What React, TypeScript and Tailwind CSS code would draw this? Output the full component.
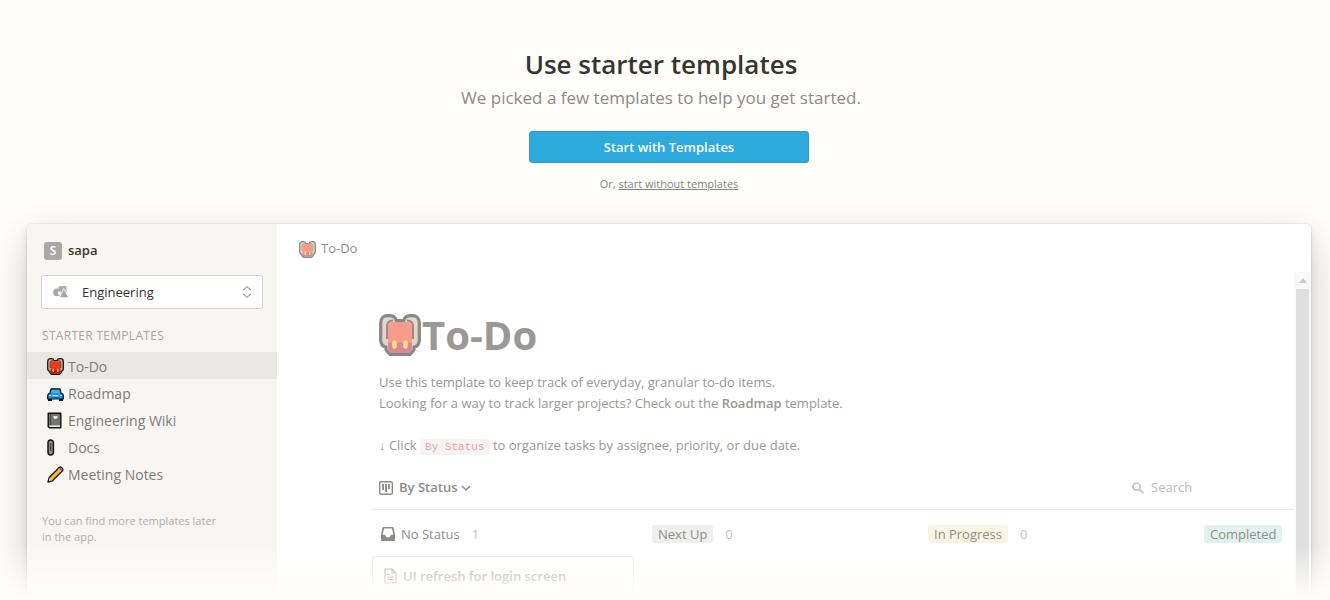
import type { ReactNode } from "react";

type IconProps = { className?: string };

function Backpack({ className = "" }: IconProps) {
  return (
    <svg viewBox="0 0 42 42" className={className} aria-hidden="true">
      <path
        d="M8.500 1.700h2.500c3.500 0 5.500 2 6.200 4.800h7.600C25.500 3.700 27.500 1.700 31 1.700h2.500c4 0 6.800 3 6.800 7V26c0 4-2 6.500-5.300 7v3l-4 4.300H11L7 36v-3c-3.300-.5-5.300-3-5.300-7V8.700c0-4 2.800-7 6.800-7z"
        fill="#cbb091"
        stroke="#141414"
        strokeWidth="3.200"
        strokeLinejoin="round"
      />
      <path d="M14 6.500c-4.500 0-6 2-6 6V25M28 6.500c4.500 0 6 2 6 6V25" fill="none" stroke="#2a1c16" strokeWidth="2" />
      <path d="M12 8h18c2 0 3 1 3 3v19H9V11c0-2 1-3 3-3z" fill="#f03a17" />
      <path d="M9 28.500h24V35c0 3-2 4-4 4H13c-2 0-4-1-4-4z" fill="#b0152f" />
      <path d="M15.500 28.500v4M26.500 28.500v4" stroke="#ffc21a" strokeWidth="4.400" strokeLinecap="round" />
    </svg>
  );
}

function Car() {
  return (
    <svg viewBox="0 0 17 17" className="size-[17px]" aria-hidden="true">
      <path d="M1 12.500h4V16H1zM12 12.500h4V16h-4z" fill="#111" />
      <path
        d="M4.700 3.800h7.600c.5 0 .9.300 1 .8L14 8c1.300.3 2.300 1.100 2.300 2.500V14H.7v-3.500C.7 9.100 1.700 8.300 3 8l.7-3.400c.1-.5.5-.8 1-.8z"
        fill="#2390dc"
        stroke="#111"
        strokeWidth="1.200"
        strokeLinejoin="round"
      />
      <path d="M4.900 4.900h7.200l.6 3H4.300z" fill="#43aeea" />
      <path d="M2 10.500h2M13 10.500h2M5.500 10.700h6" stroke="#b9e6fb" strokeWidth="1.200" />
      <path d="M5 12.700h7" stroke="#0d65a6" strokeWidth="1.200" />
    </svg>
  );
}

function Notebook() {
  return (
    <svg viewBox="0 0 17 17" className="size-[17px]" aria-hidden="true">
      <path d="M1.200 1.200h12.600v14.600H2.500l-1.300-1.300z" fill="#747474" stroke="#111" strokeWidth="1.400" strokeLinejoin="round" />
      <path d="M3.500 2v11" stroke="#4a4a4a" strokeWidth="1.200" />
      <path d="M2.500 14.200h10.500" stroke="#f3f3f3" strokeWidth="1.500" />
      <path d="M6.500 4h4v1.500L9.300 7H7.700L6.500 5.500z" fill="#ececec" />
    </svg>
  );
}

function Paperclip() {
  return (
    <svg viewBox="0 0 17 17" className="size-[17px]" aria-hidden="true">
      <rect x="1" y="1" width="5.400" height="15" rx="2.700" fill="#8f8f8f" stroke="#141414" strokeWidth="1.500" />
      <path d="M3.700 4.500v7" stroke="#2b2b2b" strokeWidth="1" strokeLinecap="round" />
    </svg>
  );
}

function Pencil() {
  return (
    <svg viewBox="0 0 17 17" className="size-[17px]" aria-hidden="true">
      <path d="M1 16l1.200-4.500L12.500 1.300c1.200-1 4.200 1.800 3.200 3.200L5.500 14.800z" fill="#fbb916" stroke="#141414" strokeWidth="1.300" strokeLinejoin="round" />
      <path d="M11.500 3l2.500 2.500" stroke="#bcbcbc" strokeWidth="1.300" />
      <path d="M12.800 1.900c1-.8 2.900 1 2.300 2.200l-.7.700-2.400-2.200z" fill="#d84a5f" />
      <path d="M2.700 12l2.300 2.300-3 .8z" fill="#f4d4a4" />
    </svg>
  );
}

const templates: { name: string; icon: ReactNode; active?: boolean }[] = [
  { name: "To-Do", icon: <Backpack className="size-[17px]" />, active: true },
  { name: "Roadmap", icon: <Car /> },
  { name: "Engineering Wiki", icon: <Notebook /> },
  { name: "Docs", icon: <Paperclip /> },
  { name: "Meeting Notes", icon: <Pencil /> },
];

function Sidebar() {
  return (
    <aside className="w-[250px] shrink-0 bg-[#f7f6f3] pt-[15px]">
      <div className="flex h-6 items-center gap-[6px] pl-[17px]">
        <span className="flex size-[18px] items-center justify-center rounded-[3px] bg-[#a9a8a6] text-xs font-semibold text-white">S</span>
        <span className="text-[13px] font-semibold text-[#37352f]">sapa</span>
      </div>

      <div className="relative mx-[14px] mt-3 text-[#a9a8a6]">
        <select
          aria-label="Team"
          className="h-[34px] w-full appearance-none rounded-[3px] border border-[#d6d5d2] bg-white pt-px pl-10 text-[13px] text-[#37352f]"
        >
          <option>Engineering</option>
        </select>
        <svg viewBox="0 0 16 12" className="pointer-events-none absolute top-[11px] left-3 h-3 w-4" aria-hidden="true">
          <circle cx="4" cy="6.300" r="3.900" fill="currentColor" />
          <path d="M5.500.2h8v8h-8z" fill="currentColor" />
          <path d="M5.200 5.500h2.600v3.200H5.200z" fill="#fff" />
          <path d="M10.800 2.500l5 9.300H6.300z" fill="currentColor" stroke="#fff" strokeWidth=".9" />
        </svg>
        <svg viewBox="0 0 10 14" className="pointer-events-none absolute top-[10px] right-[11px] h-[14px] w-[10px]" fill="none" stroke="currentColor" strokeWidth="1.300" aria-hidden="true">
          <path d="M1 5.300l4-3.500 4 3.500M1 8.700l4 3.500 4-3.500" />
        </svg>
      </div>

      <h2 className="mt-[18px] pl-[15px] text-xs leading-[18px] tracking-wide text-[#a5a4a0]">STARTER TEMPLATES</h2>

      <nav className="mt-[7px]">
        {templates.map((t) => (
          <a
            key={t.name}
            href="#"
            className={
              t.active
                ? "flex h-[27px] items-center gap-1 bg-[#e8e7e4] pt-px pl-5 text-[14px] font-medium text-[#7d7c78]"
                : "flex h-[27px] items-center gap-1 pt-px pl-5 text-[14px] font-medium text-[#7d7c78]"
            }
          >
            {t.icon}
            {t.name}
          </a>
        ))}
      </nav>

      <p className="mt-[26px] pr-[52px] pl-[15px] text-[11px] leading-4 text-[#b1b0ac]">You can find more templates later in the app.</p>
    </aside>
  );
}

function Column({ children, count }: { children: ReactNode; count: number }) {
  return (
    <div className="flex w-[262px] shrink-0 items-center gap-3 pl-1">
      {children}
      <span className="text-[#c4c3c0]">{count}</span>
    </div>
  );
}

function Board() {
  return (
    <section className="overflow-hidden pl-[95px]">
      <div className="flex h-11 items-center justify-between border-b border-[#ebebea] pr-[72px] pl-[7px]">
        <button className="flex items-center gap-[6px] text-[13px] font-semibold text-[#8d8c89]">
          <svg viewBox="0 0 14 14" className="size-[14px]" aria-hidden="true">
            <rect x=".7" y=".7" width="12.600" height="12.600" rx="1.400" fill="none" stroke="currentColor" strokeWidth="1.400" />
            <path d="M4 3v6M7 3v8M10 3v5" stroke="currentColor" strokeWidth="1.900" />
          </svg>
          <span className="flex items-center gap-1">
            By Status
            <svg viewBox="0 0 10 8" className="h-2 w-[10px]" fill="none" stroke="currentColor" strokeWidth="1.500" aria-hidden="true">
              <path d="M1 2l4 4 4-4" />
            </svg>
          </span>
        </button>
        <label className="flex items-center gap-[7px] text-[#c9c8c6]">
          <svg viewBox="0 0 12 12" className="size-3" fill="none" stroke="currentColor" aria-hidden="true">
            <circle cx="4.600" cy="4.600" r="3.600" strokeWidth="1.700" />
            <path d="M7.300 7.300l4 4" strokeWidth="2" />
          </svg>
          <input type="search" aria-label="Search" placeholder="Search" className="w-[71px] bg-transparent text-[13px] placeholder:text-[#bcbbb8]" />
        </label>
      </div>

      <div className="mt-[14px] flex gap-[14px] text-[13px] leading-5 text-[#8f8e8b]">
        <Column count={1}>
          <span className="flex items-center gap-[6px] pl-[5px]">
            <svg viewBox="0 0 14 14" className="size-[14px]" fill="#8d8c89" aria-hidden="true">
              <path fillRule="evenodd" d="M2.700 0h8.600c.7 0 1.200.4 1.400 1L14 7.800v4.700c0 .8-.7 1.500-1.500 1.500h-11C.7 14 0 13.300 0 12.500V7.800L1.300 1c.2-.6.7-1 1.400-1zM3 1.400L1.700 7.800h2.500c.2 1.500 1.300 2.700 2.800 2.700s2.600-1.200 2.800-2.700h2.500L11 1.400z" />
            </svg>
            No Status
          </span>
        </Column>
        <Column count={0}>
          <span className="rounded-[3px] bg-[#efefee] px-[6px] leading-[18px]">Next Up</span>
        </Column>
        <Column count={0}>
          <span className="rounded-[3px] bg-[#fdf3e2] px-[6px] leading-[18px]">In Progress</span>
        </Column>
        <div className="w-[262px] shrink-0 pl-1">
          <span className="inline-block rounded-[3px] bg-[#e3f1ee] px-[6px] leading-[18px]">Completed</span>
        </div>
      </div>

      <article className="mt-3 flex h-24 w-[262px] gap-[6px] rounded-[3px] border border-[#e3e3e2] px-[11px] pt-[9px] text-[13px] leading-5 font-semibold text-[#93928f]">
        <svg viewBox="0 0 13 16" className="mt-[2px] h-4 w-[13px]" fill="none" stroke="currentColor" strokeWidth="1.200" aria-hidden="true">
          <path d="M1 1h7l4 4v10H1zM8 1v4h4M3 6.500h3.500M3 9h7M3 11.500h7" />
        </svg>
        UI refresh for login screen
      </article>
    </section>
  );
}

function Preview() {
  return (
    <main className="flex min-w-0 flex-1 flex-col bg-white">
      <header className="flex h-12 shrink-0 items-center gap-[5px] pt-[2px] pl-[22px] text-[13px] text-[#8f8e8b]">
        <Backpack className="size-[17px] opacity-50" />
        To-Do
      </header>

      <div className="flex min-h-0 flex-1">
        <div className="min-w-0 flex-1 overflow-hidden pt-[38px]">
          <div className="pl-[102px] text-[#989794]">
            <h2 className="flex h-[50px] items-center gap-px text-[40px] font-bold text-[#999895]">
              <Backpack className="size-[42px] opacity-50" />
              To-Do
            </h2>
            <div className="mt-3 text-[13px] leading-[21px]">
              <p>Use this template to keep track of everyday, granular to-do items.</p>
              <p>
                Looking for a way to track larger projects? Check out the <b className="font-semibold">Roadmap</b> template.
              </p>
              <p className="mt-[21px]">
                ↓ Click{" "}
                <code className="rounded-[3px] bg-[#f4f4f3] px-[5px] py-[2px] font-['Liberation_Mono',monospace] text-[11px] text-[#f2a0a0]">By Status</code>{" "}
                to organize tasks by assignee, priority, or due date.
              </p>
            </div>
          </div>
          <div className="mt-2">
            <Board />
          </div>
        </div>

        <div className="flex w-[17px] shrink-0 flex-col bg-[#fbfbfb]" aria-hidden="true">
          <div className="flex h-[17px] items-center justify-center bg-[#f8f8f8]">
            <svg viewBox="0 0 8 5" className="h-[5px] w-2" fill="#c8c8c8">
              <path d="M4 0l4 5H0z" />
            </svg>
          </div>
          <div className="mx-[2px] flex-1 bg-[#dedede]" />
        </div>
      </div>
    </main>
  );
}

export default function App() {
  return (
    <div className="relative flex h-screen flex-col overflow-hidden bg-[#fffefb] font-['Open_Sans','Noto_Sans',sans-serif]">
      <div className="flex shrink-0 flex-col items-center pt-[46px] pl-2">
        <div className="pr-4 text-center">
          <h1 className="text-[26px] leading-9 font-semibold text-[#37352f]">Use starter templates</h1>
          <p className="mt-[2px] text-[17px] leading-7 text-[#8b8a86]">We picked a few templates to help you get started.</p>
        </div>
        <button className="mt-[19px] h-8 w-[280px] rounded-[3px] border border-[#2c9dc9] bg-[#2eaadc] pt-px text-[13px] font-semibold text-white">
          Start with Templates
        </button>
        <p className="mt-3 text-[11px] leading-[18px] text-[#85847f]">
          Or,{" "}
          <a href="#" className="underline">
            start without templates
          </a>
        </p>
      </div>

      <div className="mt-[31px] -mb-4 flex min-h-0 flex-1 pr-[19px] pl-[27px]">
        <div className="flex min-w-0 flex-1 rounded-[5px] shadow-[0_0_0_1px_rgba(15,15,15,0.05),0_5px_10px_rgba(15,15,15,0.1),0_15px_40px_rgba(15,15,15,0.2)]">
          <div className="flex min-w-0 flex-1 overflow-hidden rounded-[5px]">
            <Sidebar />
            <Preview />
          </div>
        </div>
      </div>

      <div className="pointer-events-none absolute inset-x-0 bottom-0 h-14 bg-linear-to-b from-[#fffefb]/0 to-[#fffefb] to-95%" />
    </div>
  );
}
